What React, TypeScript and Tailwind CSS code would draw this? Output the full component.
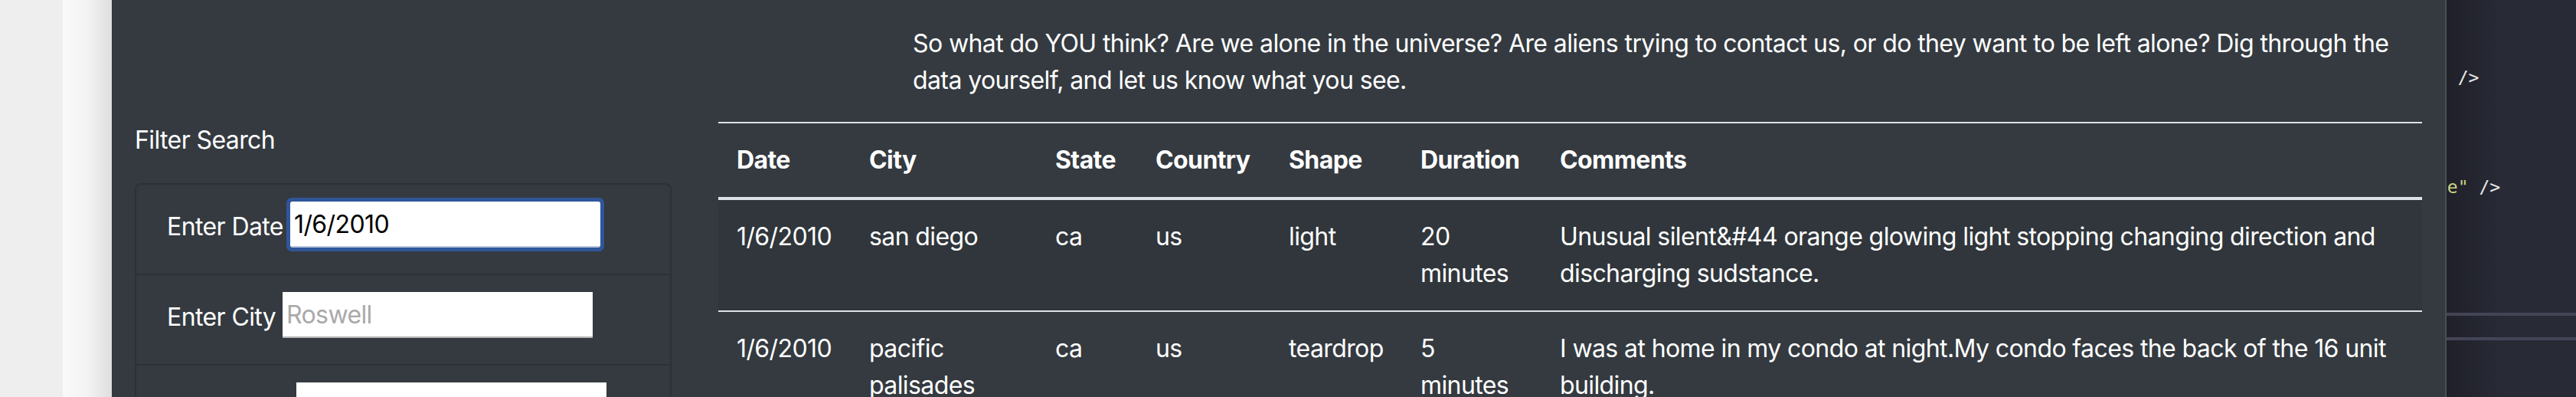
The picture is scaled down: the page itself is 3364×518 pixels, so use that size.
import React from 'react';

interface Sighting {
  date: string;
  city: string;
  state: string;
  country: string;
  shape: string;
  duration: string;
  comments: string[];
}

const sightings: Sighting[] = [
  {
    date: '1/6/2010',
    city: 'san diego',
    state: 'ca',
    country: 'us',
    shape: 'light',
    duration: '20 minutes',
    comments: ['Unusual silent&#44 orange glowing light stopping changing direction and', 'discharging sudstance.'],
  },
  {
    date: '1/6/2010',
    city: 'pacific palisades',
    state: 'ca',
    country: 'us',
    shape: 'teardrop',
    duration: '5 minutes',
    comments: ['I was at home in my condo at night.My condo faces the back of the 16 unit', 'building.'],
  },
];

const columns = ['Date', 'City', 'State', 'Country', 'Shape', 'Duration', 'Comments'];
const colWidths = ['w-[173px]', 'w-[243px]', 'w-[131px]', 'w-[174px]', 'w-[172px]', 'w-[182px]', 'w-auto'];

function FilterItem({
  label,
  labelWidth,
  placeholder,
  value,
  focused,
  last,
}: {
  label: string;
  labelWidth: string;
  placeholder?: string;
  value?: string;
  focused?: boolean;
  last?: boolean;
}) {
  return (
    <li className={`h-[118px] px-[40px] pt-[22px] ${last ? '' : 'border-b-2 border-[#2c3136]'}`}>
      <div className="flex items-center h-[60px]">
        <label className={`${labelWidth} shrink-0 mt-[6px] whitespace-nowrap text-[32px] leading-[48px]`}>{label}</label>
        <input
          type="text"
          readOnly
          defaultValue={value}
          placeholder={placeholder}
          className={`w-[405px] h-[60px] bg-white text-black text-[32px] tracking-[-0.6px] pl-[5px] border-0 border-b-2 placeholder:text-[#a9a9a9] ${
            focused
              ? 'rounded-[2px] border-[#b9c6dc] outline-[5px] outline-solid outline-[#30569a]'
              : 'border-[#b5b5b5] outline-none'
          }`}
        />
      </div>
    </li>
  );
}

export default function App() {
  return (
    <div className="flex w-[3364px] h-[518px] overflow-hidden font-['Inter',sans-serif]">
      <div className="w-[82px] shrink-0 bg-[#eeeeee]" />
      <div className="w-[64px] shrink-0 bg-linear-to-r from-[#f9f9f9] via-[#f3f3f3] to-[#dedede]" />

      <main className="w-[3047px] shrink-0 bg-[#343a40] text-white px-[30px] tracking-[-0.6px]">
        <p className="pl-[1016px] pt-[33px] text-[32px] leading-[48px] whitespace-nowrap">
          So what do YOU think? Are we alone in the universe? Are aliens trying to contact us, or do they want to be left alone? Dig through the
          <br />
          data yourself, and let us know what you see.
        </p>

        <div className="mt-[30px] flex gap-[61px]">
          <aside className="w-[701px] shrink-0">
            <h5 className="text-[32px] leading-[48px]">Filter Search</h5>
            <ul className="mt-[32px] border-2 border-[#2c3136] rounded-[8px]">
              <FilterItem label="Enter Date" labelWidth="w-[161px]" value="1/6/2010" focused />
              <FilterItem label="Enter City" labelWidth="w-[151px]" placeholder="Roswell" />
              <FilterItem label="Enter State" labelWidth="w-[169px]" last />
            </ul>
          </aside>

          <section className="flex-1">
            <table className="w-full table-fixed border-collapse text-[32px] leading-[48px]">
              <colgroup>
                {colWidths.map((w, i) => (
                  <col key={i} className={w} />
                ))}
              </colgroup>
              <thead>
                <tr>
                  {columns.map((c) => (
                    <th key={c} className="px-[24px] py-[24px] text-left font-bold border-t-2 border-b-4 border-[#dee2e6]">
                      {c}
                    </th>
                  ))}
                </tr>
              </thead>
              <tbody>
                {sightings.map((s, i) => (
                  <tr key={i} className={i % 2 === 0 ? 'bg-[#30363b]' : ''}>
                    {[s.date, s.city, s.state, s.country, s.shape, s.duration].map((v, j) => (
                      <td key={j} className="px-[24px] py-[24px] align-top border-t-2 border-[#dee2e6]">
                        {v}
                      </td>
                    ))}
                    <td className="px-[24px] py-[24px] align-top border-t-2 border-[#dee2e6] whitespace-nowrap">
                      {s.comments[0]}
                      <br />
                      {s.comments[1]}
                    </td>
                  </tr>
                ))}
              </tbody>
            </table>
          </section>
        </div>
      </main>

      {/* editor peeking out behind the browser window */}
      <div className="relative flex-1 overflow-hidden bg-[#282a36] border-l-2 border-[#4a4e57]">
        <div className="absolute inset-y-0 left-0 w-[70px] bg-linear-to-r from-[#1f2028] to-transparent" />
        <div className="relative -ml-[13px] pt-[78px] font-['DejaVu_Sans_Mono',monospace] text-[23px] leading-[47.7px] whitespace-pre text-[#e8e8e8]">
          <div>{'  />'}</div>
          <div>{' '}</div>
          <div>{' '}</div>
          <div>
            <span className="text-[#cdd283]">{'pe"'}</span>
            {' />'}
          </div>
        </div>
        <div className="relative mt-[139px] h-[4px] bg-[#434557]" />
        <div className="relative mt-[28px] h-[4px] bg-[#434557]" />
      </div>
    </div>
  );
}
